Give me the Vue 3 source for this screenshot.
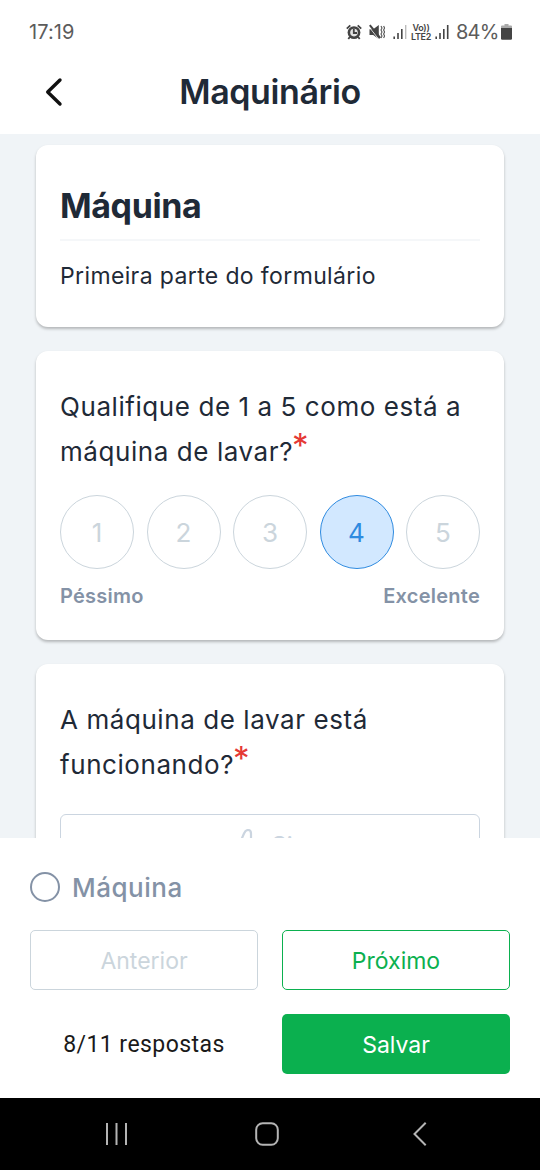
<template>
  <div class="screen">
    <div class="status-bar">
      <span class="clock">17:19</span>
      <div class="status-right">
        <svg class="ic-alarm" width="16" height="16" viewBox="0 0 16 16">
          <circle cx="8" cy="8.6" r="6.4" fill="#444" />
          <path d="M.8 4.600 4.300 1.300M15.200 4.600 11.700 1.300M3.800 13l-1.500 2M12.200 13l1.500 2" stroke="#444" stroke-width="1.800" />
          <circle cx="8" cy="8.600" r="3.800" fill="#e4e4e4" />
          <path d="M7.800 5v4h3.200" fill="none" stroke="#444" stroke-width="1.800" />
        </svg>
        <svg class="ic-mute" width="16" height="16" viewBox="0 0 16 16">
          <path d="M.5 5.200h3.700L9.800 1v14L4.200 11H.500z" fill="#444" />
          <path d="M0 2.800 10 15.600" stroke="#fff" stroke-width=".8" />
          <path d="M.8 1.200 11.200 14" stroke="#444" stroke-width="2" />
          <path d="M12 2l1 2-1 2 1 2-1 2 1 2-1 2M14.600 2l1 2-1 2 1 2-1 2 1 2-1 2" fill="none" stroke="#555" stroke-width="1.100" />
        </svg>
        <svg class="ic-signal" width="14" height="14" viewBox="0 0 14 14">
          <path d="M1.200 11.500V14M5 8v6M8.800 4v10" stroke="#444" stroke-width="1.600" />
          <path d="M12.700 0v14" stroke="#bbb" stroke-width="1.400" />
        </svg>
        <span class="volte"><span>Vo))</span><span>LTE2</span></span>
        <svg class="ic-signal" width="14" height="14" viewBox="0 0 14 14">
          <path d="M1.200 11.500V14M5 8v6M8.800 4v10M12.700 0v14" stroke="#444" stroke-width="1.600" />
        </svg>
        <span class="percent">84%</span>
        <svg class="ic-battery" width="11" height="16" viewBox="0 0 11 16">
          <path d="M3.500 0h4v1.500H10q1 0 1 1V4H0V2.500q0-1 1-1h2.500z" fill="#aaa" />
          <path d="M0 4h11v10.500q0 1.200-1.200 1.200H1.200Q0 15.700 0 14.500z" fill="#444" />
        </svg>
      </div>
    </div>

    <header class="header">
      <button class="back" aria-label="Voltar">
        <svg width="18" height="30" viewBox="0 0 18 30">
          <path d="M15 3 2.700 15 15 27" fill="none" stroke="#111" stroke-width="3.400" stroke-linecap="round" stroke-linejoin="round" />
        </svg>
      </button>
      <h1>Maquinário</h1>
    </header>

    <main class="content">
      <section class="card intro">
        <h2>Máquina</h2>
        <p>Primeira parte do formulário</p>
      </section>

      <section class="card rating">
        <div class="question">Qualifique de 1 a 5 como está a máquina de lavar?<span class="required">*</span></div>
        <div class="scale">
          <button
            v-for="n in 5"
            :key="n"
            class="dot"
            :class="{ active: n === rating }"
            @click="rating = n"
          >{{ n }}</button>
        </div>
        <div class="legend">
          <span>Péssimo</span>
          <span>Excelente</span>
        </div>
      </section>

      <section class="card">
        <div class="question">A máquina de lavar está funcionando?<span class="required">*</span></div>
        <button class="option">
          <svg width="32" height="32" viewBox="0 0 32 32">
            <path d="M4 16h5l5-11.500Q15.500 1 18 1q3 0 3 3.500V13h7q3 0 2.500 3l-2 11q-.5 3-3.500 3H9V16M4 16v14h5" fill="none" stroke="#cbd5e0" stroke-width="2.200" stroke-linejoin="round" />
          </svg>
          <span>Sim</span>
        </button>
      </section>
    </main>

    <footer class="footer">
      <div class="step">
        <span class="step-circle"></span>
        <span>Máquina</span>
      </div>
      <div class="actions">
        <button class="btn prev">Anterior</button>
        <button class="btn next">Próximo</button>
        <span class="count">8/11 respostas</span>
        <button class="btn save">Salvar</button>
      </div>
    </footer>

    <nav class="nav-bar">
      <svg width="24" height="24" viewBox="0 0 24 24">
        <path d="M2 1v22M11.500 1v22M21 1v22" stroke="#b4b4b4" stroke-width="2" />
      </svg>
      <svg class="ic-home" width="24" height="24" viewBox="0 0 24 24">
        <rect x="1.200" y="1.200" width="21.600" height="21.600" rx="6.500" fill="none" stroke="#b4b4b4" stroke-width="2" />
      </svg>
      <svg width="14" height="24" viewBox="0 0 14 24">
        <path d="M12.700.800 1.500 12l11.200 11.200" fill="none" stroke="#b4b4b4" stroke-width="2" />
      </svg>
    </nav>
  </div>
</template>

<script setup>
import { ref } from 'vue'

const rating = ref(4)
</script>

<style>
body {
  margin: 0;
}
</style>

<style scoped>
.screen {
  width: 540px;
  height: 1170px;
  display: flex;
  flex-direction: column;
  overflow: hidden;
  background: #fff;
  color: #1f2a37;
  font-family: Inter, "Liberation Sans", sans-serif;
}
button {
  padding: 0;
  border: none;
  background: none;
  font-family: inherit;
  cursor: pointer;
}
svg {
  display: block;
  flex-shrink: 0;
}
.status-bar {
  height: 64px;
  box-sizing: border-box;
  padding: 0 28px 0 29px;
  display: flex;
  align-items: center;
  justify-content: space-between;
  color: #5c5c5c;
  font-size: 20px;
}
.clock {
  letter-spacing: 0.1px;
}
.status-right {
  display: flex;
  align-items: center;
}
.ic-mute {
  margin-left: 7px;
}
.ic-signal {
  margin-left: 8px;
}
.volte {
  margin: 0 -4px 0 4px;
  width: 20px;
  display: flex;
  flex-direction: column;
  align-items: center;
  font-size: 9px;
  line-height: 9px;
  font-weight: 600;
  letter-spacing: -0.3px;
  color: #444;
}
.percent {
  margin: 0 4px 0 7px;
  width: 41px;
  letter-spacing: -0.8px;
  white-space: nowrap;
}
.header {
  height: 70px;
  display: grid;
  grid-template-columns: 90px 1fr 90px;
  align-items: center;
  flex-shrink: 0;
}
.back {
  justify-self: start;
  margin: -14px 0 0 45px;
}
h1 {
  margin: -14px 0 0;
  text-align: center;
  font-size: 34px;
  font-weight: 600;
  line-height: 44px;
  letter-spacing: -0.4px;
}
.content {
  height: 704px;
  box-sizing: border-box;
  padding: 11px 36px 0;
  display: flex;
  flex-direction: column;
  gap: 24px;
  overflow: hidden;
  background: #f0f4f7;
  flex-shrink: 0;
}
.card {
  box-sizing: border-box;
  padding: 33px 24px;
  background: #fff;
  border-radius: 12px;
  box-shadow: 0 2px 3px rgba(0, 0, 0, 0.25);
  flex-shrink: 0;
}
.intro {
  height: 182px;
}
h2 {
  margin: 0;
  padding: 5px 0 11px;
  border-bottom: 2px solid #f5f7f9;
  font-size: 34px;
  font-weight: 700;
  line-height: 45px;
  letter-spacing: -0.4px;
}
.intro p {
  margin: 20px 0 0;
  font-size: 23px;
  line-height: 30px;
  letter-spacing: 0.37px;
}
.rating {
  height: 289px;
}
.question {
  font-size: 26px;
  line-height: 45px;
  letter-spacing: 0.57px;
}
.required {
  margin-left: -1px;
  color: #e53935;
  font-size: 33px;
  line-height: 0;
  vertical-align: 4px;
}
.scale {
  margin-top: 21px;
  display: flex;
  justify-content: space-between;
}
.dot {
  width: 74px;
  height: 74px;
  border: 1.5px solid #cbd5dc;
  border-radius: 50%;
  color: #cbd5dc;
  font-size: 26px;
}
.dot.active {
  border-color: #2f8be0;
  background: #d2e8ff;
  color: #2f8be0;
}
.legend {
  margin-top: 14px;
  display: flex;
  justify-content: space-between;
  color: #8492a6;
  font-size: 20px;
  font-weight: 600;
  line-height: 26px;
  letter-spacing: 0.25px;
}
.option {
  width: 100%;
  height: 62px;
  margin-top: 27px;
  padding-left: 4px;
  display: flex;
  align-items: center;
  justify-content: center;
  gap: 9px;
  border: 1.5px solid #cbd5e0;
  border-radius: 6px;
  color: #cbd5e0;
  font-size: 24px;
}
.footer {
  height: 260px;
  box-sizing: border-box;
  padding: 29px 30px 0;
  flex-shrink: 0;
}
.step {
  height: 40px;
  display: flex;
  align-items: center;
  gap: 12px;
  color: #8492a6;
  font-size: 26px;
  font-weight: 500;
  letter-spacing: 0.5px;
}
.step-circle {
  width: 30px;
  height: 30px;
  box-sizing: border-box;
  border: 2px solid #8492a6;
  border-radius: 50%;
}
.actions {
  margin-top: 23px;
  display: grid;
  grid-template-columns: 1fr 1fr;
  column-gap: 24px;
  row-gap: 24px;
  align-items: center;
}
.btn {
  height: 60px;
  padding-top: 2px;
  border-radius: 5px;
  font-size: 23px;
}
.prev {
  border: 1.5px solid #cbd5dc;
  color: #cbd5dc;
}
.next {
  border: 1.5px solid #0bb04f;
  color: #0bb04f;
}
.save {
  background: #0bb04f;
  color: #fff;
}
.count {
  text-align: center;
  color: #1a1a1a;
  font-family: Roboto, "Liberation Sans", sans-serif;
  font-size: 23px;
  letter-spacing: 0.45px;
}
.nav-bar {
  height: 72px;
  box-sizing: border-box;
  padding: 0 113px 0 105px;
  display: flex;
  align-items: center;
  justify-content: space-between;
  background: #000;
  flex-shrink: 0;
}
.ic-home {
  margin-right: 8px;
}
</style>
